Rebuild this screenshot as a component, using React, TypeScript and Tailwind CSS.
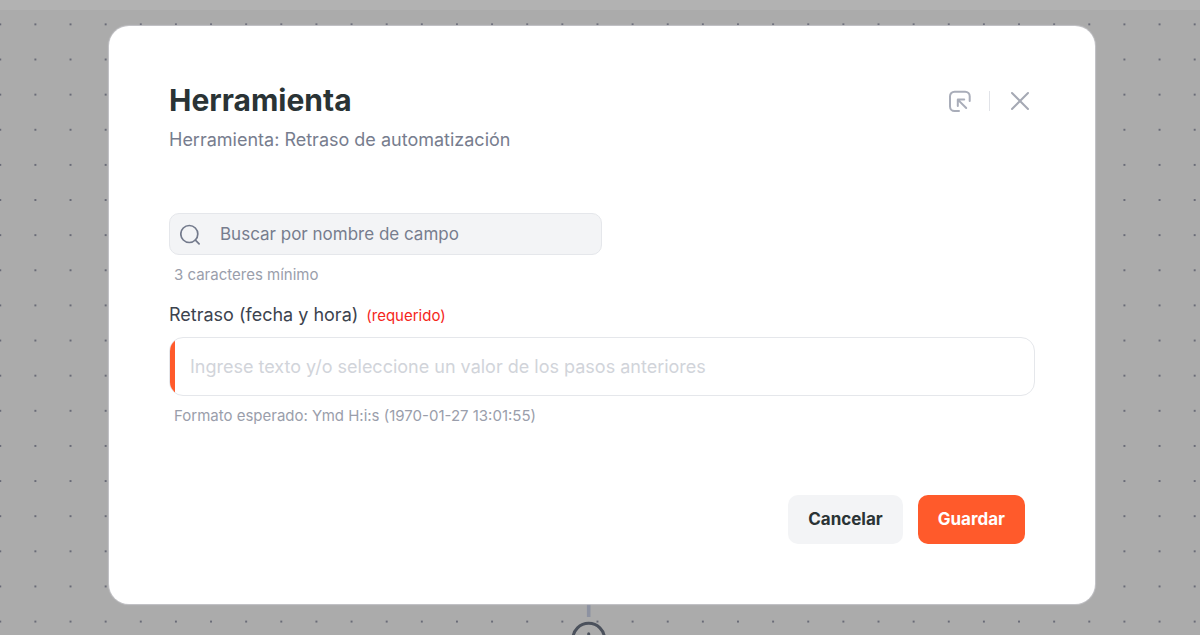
import React from "react";

function CanvasBackground() {
  return (
    <div aria-hidden="true" className="absolute inset-0 flex flex-col">
      <div className="h-2.5 shrink-0 bg-[#b2b2b2]" />
      <div className="relative min-h-0 flex-1 bg-[#ababab]">
        <svg className="absolute inset-0 h-full w-full">
          <defs>
            <pattern id="dots" width="35.13" height="35.13" patternUnits="userSpaceOnUse" x="-17.3" y="-3.2">
              <circle cx="17.56" cy="17.56" r="1" fill="#545666" />
            </pattern>
          </defs>
          <rect width="100%" height="100%" fill="url(#dots)" />
        </svg>
      </div>
      <svg className="absolute top-[604px] left-[569px]" width="40" height="52" viewBox="0 0 40 52" fill="none">
        <path d="M19.7 0v13" stroke="#8d92a1" strokeWidth="3.6" />
        <circle cx="19.7" cy="35" r="15.8" stroke="#4b515c" strokeWidth="3" />
        <path d="M19.7 29.8v14M12 36.5h15.4" stroke="#4b515c" strokeWidth="3" strokeLinecap="round" />
      </svg>
    </div>
  );
}

function ExpandIcon() {
  return (
    <svg width="24" height="24" viewBox="0 0 24 24" fill="none" stroke="#a9adb9" strokeWidth="2" strokeLinecap="round" strokeLinejoin="round">
      <path d="M12 22H7.500a4.500 4.500 0 0 1-4.500-4.500V7.200a4.500 4.500 0 0 1 4.500-4.500h10.700a4.500 4.500 0 0 1 4.500 4.500v4.800" />
      <path d="M19.200 19 10.800 10.600M10.800 17v-6.400h6.400" />
    </svg>
  );
}

function CloseIcon() {
  return (
    <svg width="20" height="20" viewBox="0 0 20 20" fill="none" stroke="#a5a9b4" strokeWidth="2" strokeLinecap="round">
      <path d="M2 2l16 16M18 2 2 18" />
    </svg>
  );
}

function SearchIcon() {
  return (
    <svg width="22" height="22" viewBox="0 0 22 22" fill="none" stroke="#737a8c" strokeWidth="1.7" strokeLinecap="round">
      <circle cx="9.3" cy="11" r="8.5" />
      <path d="m15.400 17.100 3.700 3.700" />
    </svg>
  );
}

export default function App() {
  return (
    <div className="relative min-h-screen overflow-hidden pt-[26px] pr-[105px] pb-[31px] pl-[109px] font-['Inter',sans-serif]">
      <CanvasBackground />
      <section
        role="dialog"
        aria-labelledby="dialog-title"
        className="relative rounded-[20px] bg-white px-[60px] pt-14 pb-[60px] shadow-[0_0_1px_1px_#c4c4c8]"
      >
        <header className="flex items-start justify-between">
          <div>
            <h1 id="dialog-title" className="text-[30px] leading-9 font-bold text-[#2a3335]">
              Herramienta
            </h1>
            <p className="mt-2 text-[18px] leading-7 text-[#777d8e]">Herramienta: Retraso de automatización</p>
          </div>
          <div className="mt-[7px] mr-[5px] flex items-center gap-[18px]">
            <button type="button" aria-label="Expandir">
              <ExpandIcon />
            </button>
            <span className="h-5 w-px bg-[#e1e3e8]" />
            <button type="button" aria-label="Cerrar" className="ml-0.5">
              <CloseIcon />
            </button>
          </div>
        </header>

        <form onSubmit={(e) => e.preventDefault()} className="mt-[59px]">
          <label className="flex h-[42px] w-1/2 items-center gap-[18px] rounded-[10px] border border-[#e5e7eb] bg-[#f3f4f6] px-2.5">
            <SearchIcon />
            <input
              type="search"
              aria-label="Buscar por nombre de campo"
              placeholder="Buscar por nombre de campo"
              className="min-w-0 flex-1 bg-transparent text-[17px] leading-6 outline-none placeholder:text-[#777d8e]"
            />
          </label>
          <p className="mt-2 px-[5px] text-[15px] leading-6 text-[#9a9eab]">3 caracteres mínimo</p>

          <label htmlFor="delay" className="mt-3.5 flex items-baseline gap-2 text-[18px] leading-7 text-[#3c434e]">
            Retraso (fecha y hora)
            <span className="text-[15px] leading-6 text-[#f5261b]">(requerido)</span>
          </label>
          <div className="mt-2 flex h-[59px] overflow-hidden rounded-[14px] border border-[#e5e7eb]">
            <span className="w-[5px] shrink-0 bg-[#ff5a2b]" />
            <input
              id="delay"
              type="text"
              placeholder="Ingrese texto y/o seleccione un valor de los pasos anteriores"
              className="min-w-0 flex-1 px-[15px] text-[18px] leading-7 outline-none placeholder:text-[#d1d4da]"
            />
          </div>
          <p className="mt-2 px-[5px] text-[15px] leading-6 text-[#9a9eab]">
            Formato esperado: Ymd H:i:s (1970-01-27 13:01:55)
          </p>

          <div className="mt-[67px] flex justify-end gap-[15px] pr-2.5">
            <button type="button" className="h-[49px] rounded-[10px] bg-[#f3f4f6] px-5 text-[17px] font-bold text-[#2a3335]">
              Cancelar
            </button>
            <button type="submit" className="h-[49px] rounded-[10px] bg-[#ff5a2b] px-5 text-[17px] font-bold text-white">
              Guardar
            </button>
          </div>
        </form>
      </section>
    </div>
  );
}
